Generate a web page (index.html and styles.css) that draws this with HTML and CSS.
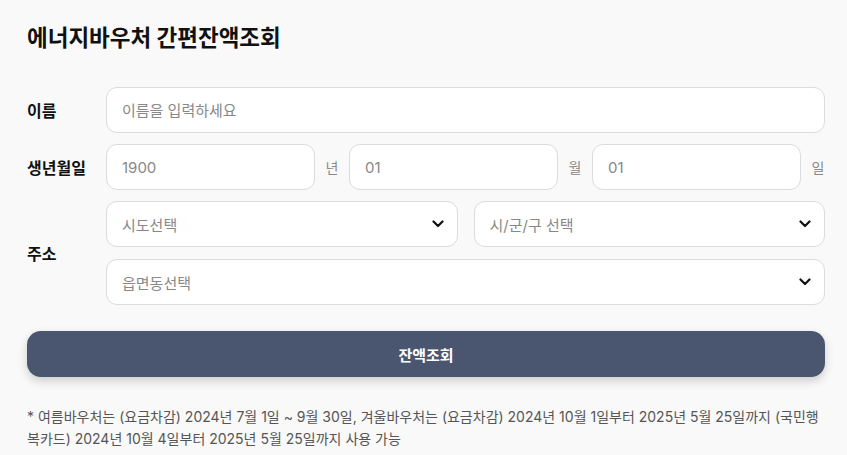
FILE: index.html
```html
<!DOCTYPE html>
<html lang="ko">
<head>
    <meta charset="UTF-8">
    <meta name="viewport" content="width=device-width, initial-scale=1.0">
    <title>에너지바우처 간편잔액조회</title>
    <link rel="stylesheet" href="styles.css">
</head>
<body>
    <div class="page">
        <h1>에너지바우처 간편잔액조회</h1>

        <form class="lookup-form" id="lookupForm">
            <!-- 이름 -->
            <div class="form-row">
                <label class="row-label" for="name">이름</label>
                <div class="row-fields">
                    <input type="text" id="name" placeholder="이름을 입력하세요">
                </div>
            </div>

            <!-- 생년월일 -->
            <div class="form-row">
                <label class="row-label" for="year">생년월일</label>
                <div class="row-fields birth">
                    <input type="text" id="year" placeholder="1900">
                    <span class="unit">년</span>
                    <input type="text" id="month" placeholder="01">
                    <span class="unit">월</span>
                    <input type="text" id="day" placeholder="01">
                    <span class="unit">일</span>
                </div>
            </div>

            <!-- 주소 -->
            <div class="form-row">
                <label class="row-label">주소</label>
                <div class="row-fields address">
                    <div class="select-pair">
                        <div class="select-box">
                            <span>시도선택</span>
                            <svg viewBox="0 0 12 8" width="12" height="8"><path d="M1.5 1.5 6 6l4.5-4.5" fill="none" stroke="#111" stroke-width="2.2" stroke-linecap="round" stroke-linejoin="round"/></svg>
                        </div>
                        <div class="select-box">
                            <span>시/군/구 선택</span>
                            <svg viewBox="0 0 12 8" width="12" height="8"><path d="M1.5 1.5 6 6l4.5-4.5" fill="none" stroke="#111" stroke-width="2.2" stroke-linecap="round" stroke-linejoin="round"/></svg>
                        </div>
                    </div>
                    <div class="select-box">
                        <span>읍면동선택</span>
                        <svg viewBox="0 0 12 8" width="12" height="8"><path d="M1.5 1.5 6 6l4.5-4.5" fill="none" stroke="#111" stroke-width="2.2" stroke-linecap="round" stroke-linejoin="round"/></svg>
                    </div>
                </div>
            </div>

            <button type="submit" class="submit-btn">잔액조회</button>
        </form>

        <p class="notice">* 여름바우처는 (요금차감) 2024년 7월 1일 ~ 9월 30일, 겨울바우처는 (요금차감) 2024년 10월 1일부터 2025년 5월 25일까지 (국민행복카드) 2024년 10월 4일부터 2025년 5월 25일까지 사용 가능</p>
    </div>

    <script>
        document.getElementById('lookupForm').addEventListener('submit', function(e) {
            e.preventDefault();
        });
    </script>
</body>
</html>
```

FILE: styles.css
```css
* {
    box-sizing: border-box;
    margin: 0;
    padding: 0;
}

body {
    font-family: Inter, 'Noto Sans CJK KR', sans-serif;
    background-color: #f9f9f9;
    color: #111;
}

.page {
    padding: 22px 22px 0 27px;
}

h1 {
    font-size: 22.5px;
    font-weight: 700;
    line-height: 32px;
    margin-bottom: 33px;
}

/* Form */
.lookup-form {
    display: flex;
    flex-direction: column;
    gap: 11px;
}

.form-row {
    display: flex;
    align-items: center;
}

.row-label {
    width: 79px;
    flex-shrink: 0;
    font-size: 16px;
    font-weight: 700;
}

.row-fields {
    flex: 1;
    display: flex;
    align-items: center;
}

input, .select-box {
    height: 46px;
    background-color: #fff;
    border: 1px solid #dcdcdc;
    border-radius: 11px;
    padding: 0 15px;
    font-family: inherit;
    font-size: 15px;
    color: #333;
}

input {
    width: 100%;
}

input::placeholder {
    color: #888;
}

.birth input {
    width: 209px;
    flex-shrink: 0;
}

.unit {
    flex-shrink: 0;
    width: 34px;
    font-size: 14px;
    color: #888;
    text-align: center;
}

.address {
    flex-direction: column;
    align-items: stretch;
    gap: 12px;
}

.select-pair {
    display: flex;
    gap: 16px;
}

.select-pair .select-box {
    flex: 1;
}

.select-box {
    display: flex;
    align-items: center;
    justify-content: space-between;
    color: #888;
    padding-right: 13px;
}

.submit-btn {
    margin-top: 15px;
    height: 46px;
    border: none;
    border-radius: 14px;
    background-color: #4a5670;
    color: #fff;
    font-family: inherit;
    font-size: 15px;
    font-weight: 700;
    cursor: pointer;
    box-shadow: 0 4px 10px rgba(0,0,0,0.18);
}

.notice {
    margin-top: 29px;
    font-size: 14px;
    line-height: 22px;
    color: #555;
}
```
